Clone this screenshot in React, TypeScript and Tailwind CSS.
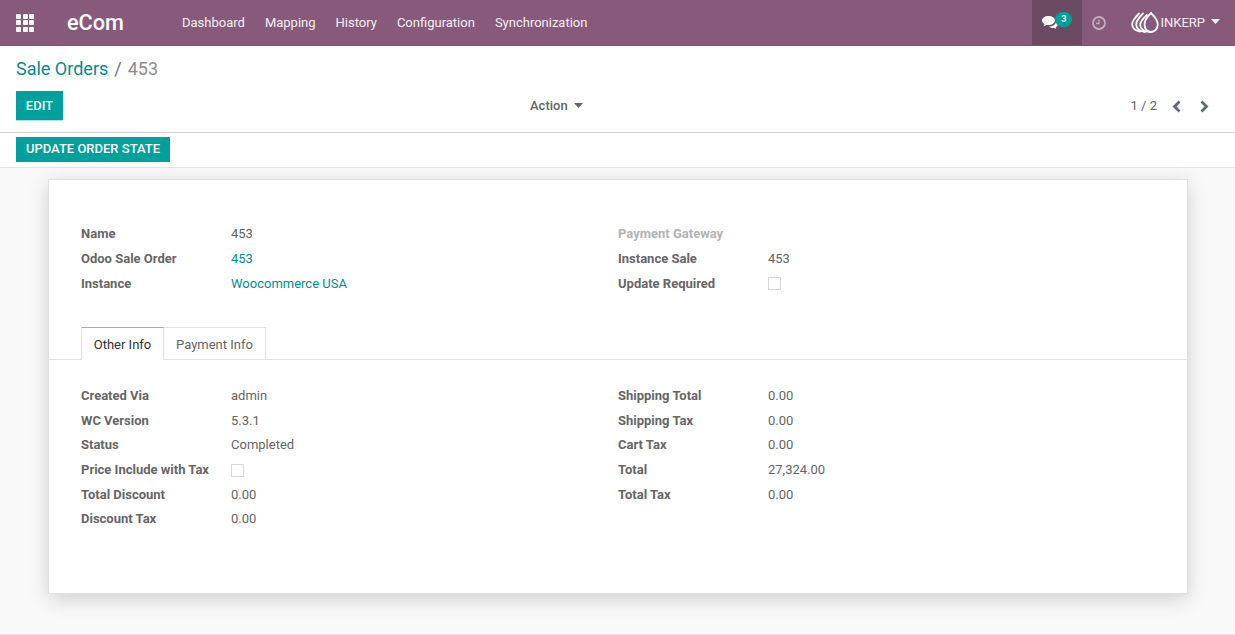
import React from "react";

const Logo = () => (
  <svg width="28" height="21" viewBox="0 0 28 21" fill="none" stroke="#fff" strokeWidth="1.800" strokeLinecap="round">
    <path d="M8 1.500C4.500 5 1 9 1.200 12.500c.2 3.500 3 6 7.800 7" />
    <path d="M12 1.500C8.500 5 5 9 5.200 12.500c.2 3.500 3 6.500 8.800 7.500" />
    <path d="M16 3C12.500 6 9 10 9.200 13c.2 3.500 3 6.500 9.800 7" />
    <path d="M20 1c-3 3-6.500 7-6.500 11.500 0 4.500 3 7.500 6.500 7.500s6.800-3 6.800-7.500C26.800 8 23 4 20 1z" />
  </svg>
);

const Grid = () => (
  <div className="grid grid-cols-3 gap-[1.5px] w-[18px]">
    {Array.from({ length: 9 }).map((_, i) => (
      <div key={i} className="h-[5px] bg-white rounded-[1px]" />
    ))}
  </div>
);

const Chat = () => (
  <svg width="16" height="13" viewBox="0 0 16 13">
    <path d="M6.500 0C2.900 0 0 2 0 4.500c0 1.500 1 2.800 2.600 3.600-.2.800-.7 1.500-1.300 2.100 1.200-.2 2.400-.7 3.400-1.400.6.100 1.200.200 1.800.200 3.600 0 6.500-2 6.500-4.500S10.100 0 6.500 0z" fill="#fff" />
    <path d="M14 5.500c0 2.800-3 5-6.500 5l-.8 0c1 .9 2.400 1.400 4 1.400.4 0 .8 0 1.200-.1.700.5 1.600.9 2.600 1-.4-.4-.7-1-.9-1.500 1.500-.7 2.400-1.800 2.400-3.100 0-1-.8-2-2-2.700z" fill="#fff" />
  </svg>
);

const Clock = () => (
  <svg width="14" height="14" viewBox="0 0 14 14" fill="none" stroke="#fff" strokeOpacity="0.5">
    <circle cx="7" cy="7" r="6" strokeWidth="1.800" />
    <path d="M7 3.500V7.500H4" strokeWidth="1.300" />
  </svg>
);

const Chevron = ({ dir }: { dir: "l" | "r" }) => (
  <svg width="11" height="13" viewBox="0 0 11 13" fill="none" stroke="#5f6b78" strokeWidth="2.800">
    <path d={dir === "l" ? "M8.500 1.500L3.500 6.500l5 5" : "M2.500 1.500l5 5-5 5"} />
  </svg>
);

const Caret = ({ color }: { color: string }) => (
  <svg width="9" height="5" viewBox="0 0 9 5"><path d="M0 0h9L4.500 5z" fill={color} /></svg>
);

const Check = () => <div className="w-[13px] h-[13px] border border-[#d6d6d6] bg-white" />;

const Row = ({ label, children, muted, h = "h-[25px]" }: { label: string; children?: React.ReactNode; muted?: boolean; h?: string }) => (
  <div className={`flex items-center ${h}`}>
    <div className={`w-[150px] font-bold ${muted ? "text-[#b3b3b3]" : "text-[#666666]"}`}>{label}</div>
    <div className="text-[#666666]">{children}</div>
  </div>
);

const Link = ({ children }: { children: React.ReactNode }) => <span className="text-[#008f8c]">{children}</span>;

export default function App() {
  return (
    <div className="h-[635px] w-[1235px] overflow-hidden bg-[#f9f9f9] flex flex-col text-[13px] leading-[20px] font-['Roboto',sans-serif] border-b border-[#e0e0e0]">
      <header className="h-[46px] shrink-0 bg-[#875a7b] border-b border-[#7c5170] flex items-center text-white">
        <div className="ml-4 w-[51px]"><Grid /></div>
        <div className="text-[21.67px] w-[115px] leading-none font-medium">eCom</div>
        <nav className="flex gap-5 text-[#f4eef2]">
          <span>Dashboard</span>
          <span>Mapping</span>
          <span>History</span>
          <span>Configuration</span>
          <span>Synchronization</span>
        </nav>
        <div className="ml-auto flex items-center h-full">
          <div className="relative w-[50px] h-full bg-[#6b4a62] flex items-center pl-[10px]">
            <Chat />
            <span className="absolute left-[23px] top-[12px] w-[17px] h-[15px] rounded-full bg-[#00a09d] text-white text-[9px] leading-[15px] font-bold text-center">3</span>
          </div>
          <div className="ml-[10px] w-[14px]"><Clock /></div>
          <div className="ml-[25px] flex items-center mr-[15px]">
            <Logo />
            <span className="ml-[1px] text-[#f4eef2]">INKERP</span>
            <span className="ml-[6px] mb-[2px]"><Caret color="#fff" /></span>
          </div>
        </div>
      </header>

      <section className="shrink-0 bg-white border-b border-[#ced4da] h-[87px] px-4 flex flex-col">
        <div className="h-[45px] flex items-center text-[18px] pt-[1px]">
          <span className="text-[#008f8c]">Sale Orders</span>
          <span className="text-[#6c757d] mx-[6px]">/</span>
          <span className="text-[#8f8f8f]">453</span>
        </div>
        <div className="flex items-start relative">
          <button className="w-[47px] h-[30px] bg-[#00a09d] text-white font-medium leading-[30px] text-center border-b border-[#b3e3e2]">EDIT</button>
          <div className="absolute left-[514px] top-[5px] flex items-center gap-[6px] text-[#666666] font-medium">
            <span>Action</span>
            <span className="mb-[2px]"><Caret color="#666666" /></span>
          </div>
          <div className="ml-auto flex items-center h-[30px] text-[#666666] pr-[9px]">
            <span>1 / 2</span>
            <span className="ml-[14px]"><Chevron dir="l" /></span>
            <span className="ml-[17px]"><Chevron dir="r" /></span>
          </div>
        </div>
      </section>

      <section className="shrink-0 bg-white border-b border-[#e5e5e5] h-[35px] px-4 pt-[4px]">
        <button className="h-[25px] w-[154px] bg-[#00a09d] text-white font-medium leading-[20px] pb-[2px] text-center">UPDATE ORDER STATE</button>
      </section>

      <main className="flex-1 pl-12 pr-[47px] pt-[11px]">
        <div className="h-[415px] bg-white border border-[#e0e0e0] shadow-[0_5px_20px_-1px_rgba(0,0,0,0.19)] pt-[41px]">
          <div className="grid grid-cols-2 px-8">
            <div>
              <Row label="Name">453</Row>
              <Row label="Odoo Sale Order"><Link>453</Link></Row>
              <Row label="Instance"><Link>Woocommerce USA</Link></Row>
            </div>
            <div>
              <Row label="Payment Gateway" muted />
              <Row label="Instance Sale">453</Row>
              <Row label="Update Required"><Check /></Row>
            </div>
          </div>

          <div className="mt-[31px] h-[33px] border-b border-[#dee2e6] px-8 flex">
            <div className="h-[33px] w-[83px] pt-[2px] bg-white border border-[#dee2e6] border-b-white border-t-[#b4a6b0] flex items-center justify-center text-[#333333]">Other Info</div>
            <div className="h-[33px] w-[102px] pt-[2px] border border-l-0 border-[#dee2e6] flex items-center justify-center text-[#666666]">Payment Info</div>
          </div>

          <div className="grid grid-cols-2 px-8 pt-[24px]">
            <div>
              <Row h="h-[24.6px]" label="Created Via">admin</Row>
              <Row h="h-[24.6px]" label="WC Version">5.3.1</Row>
              <Row h="h-[24.6px]" label="Status">Completed</Row>
              <Row h="h-[24.6px]" label="Price Include with Tax"><Check /></Row>
              <Row h="h-[24.6px]" label="Total Discount">0.00</Row>
              <Row h="h-[24.6px]" label="Discount Tax">0.00</Row>
            </div>
            <div>
              <Row h="h-[24.6px]" label="Shipping Total">0.00</Row>
              <Row h="h-[24.6px]" label="Shipping Tax">0.00</Row>
              <Row h="h-[24.6px]" label="Cart Tax">0.00</Row>
              <Row h="h-[24.6px]" label="Total">27,324.00</Row>
              <Row h="h-[24.6px]" label="Total Tax">0.00</Row>
            </div>
          </div>
        </div>
      </main>
    </div>
  );
}
